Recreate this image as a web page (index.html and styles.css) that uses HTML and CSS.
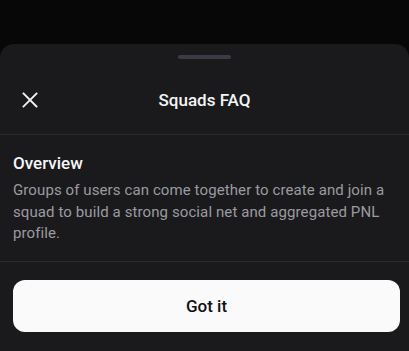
FILE: index.html
```html
<!DOCTYPE html>
<html>
<head>
<meta charset="utf-8">
<link rel="stylesheet" href="styles.css">
</head>
<body>
<div class="sheet">
  <div class="handle"></div>
  <div class="header">
    <button class="close" aria-label="Close">
      <svg width="16" height="16" viewBox="0 0 16 16"><path d="M1.5 1.5L14.5 14.5M14.5 1.5L1.5 14.5" stroke="#f2f2f2" stroke-width="1.8" stroke-linecap="square" fill="none"/></svg>
    </button>
    <div class="title">Squads FAQ</div>
  </div>
  <div class="content">
    <div class="heading">Overview</div>
    <p class="body">Groups of users can come together to create and join a squad to build a strong social net and aggregated PNL profile.</p>
  </div>
  <div class="footer">
    <button class="primary">Got it</button>
  </div>
</div>
</body>
</html>
```
FILE: styles.css
```css
html, body {
  margin: 0;
  padding: 0;
  background: #070707;
  height: 100%;
  overflow: hidden;
  font-family: Roboto, "Liberation Sans", sans-serif;
}
.sheet {
  margin-top: 44px;
  background: #1a1a1d;
  border-radius: 14px 14px 0 0;
  height: 307px;
  display: flex;
  flex-direction: column;
}
.handle {
  align-self: center;
  margin-top: 11px;
  width: 53px;
  height: 4px;
  border-radius: 2px;
  background: #3a3b45;
}
.header {
  position: relative;
  height: 36px;
  margin: 23px 0 16px;
  display: flex;
  align-items: center;
  justify-content: center;
}
.close {
  position: absolute;
  left: 22px;
  top: 10px;
  padding: 0;
  border: 0;
  background: none;
  width: 16px;
  height: 16px;
  display: flex;
}
.title {
  color: #f4f4f4;
  font-size: 17px;
  font-weight: 500;
}
.content {
  border-top: 1px solid #2a2a2e;
  border-bottom: 1px solid #2a2a2e;
  padding: 17px 13px 16px;
}
.heading {
  color: #f7f7f7;
  font-size: 17px;
  font-weight: 500;
  line-height: 23px;
}
.body {
  margin: 5px 0 0;
  color: #9b9ba0;
  font-size: 15px;
  letter-spacing: 0.1px;
  line-height: 21.5px;
}
.footer {
  padding: 18px 9px 0 13px;
}
.primary {
  width: 100%;
  height: 52px;
  border: 0;
  border-radius: 12px;
  background: #fafafa;
  color: #111113;
  font-family: Roboto, "Liberation Sans", sans-serif;
  font-size: 17px;
  font-weight: 500;
}
```
